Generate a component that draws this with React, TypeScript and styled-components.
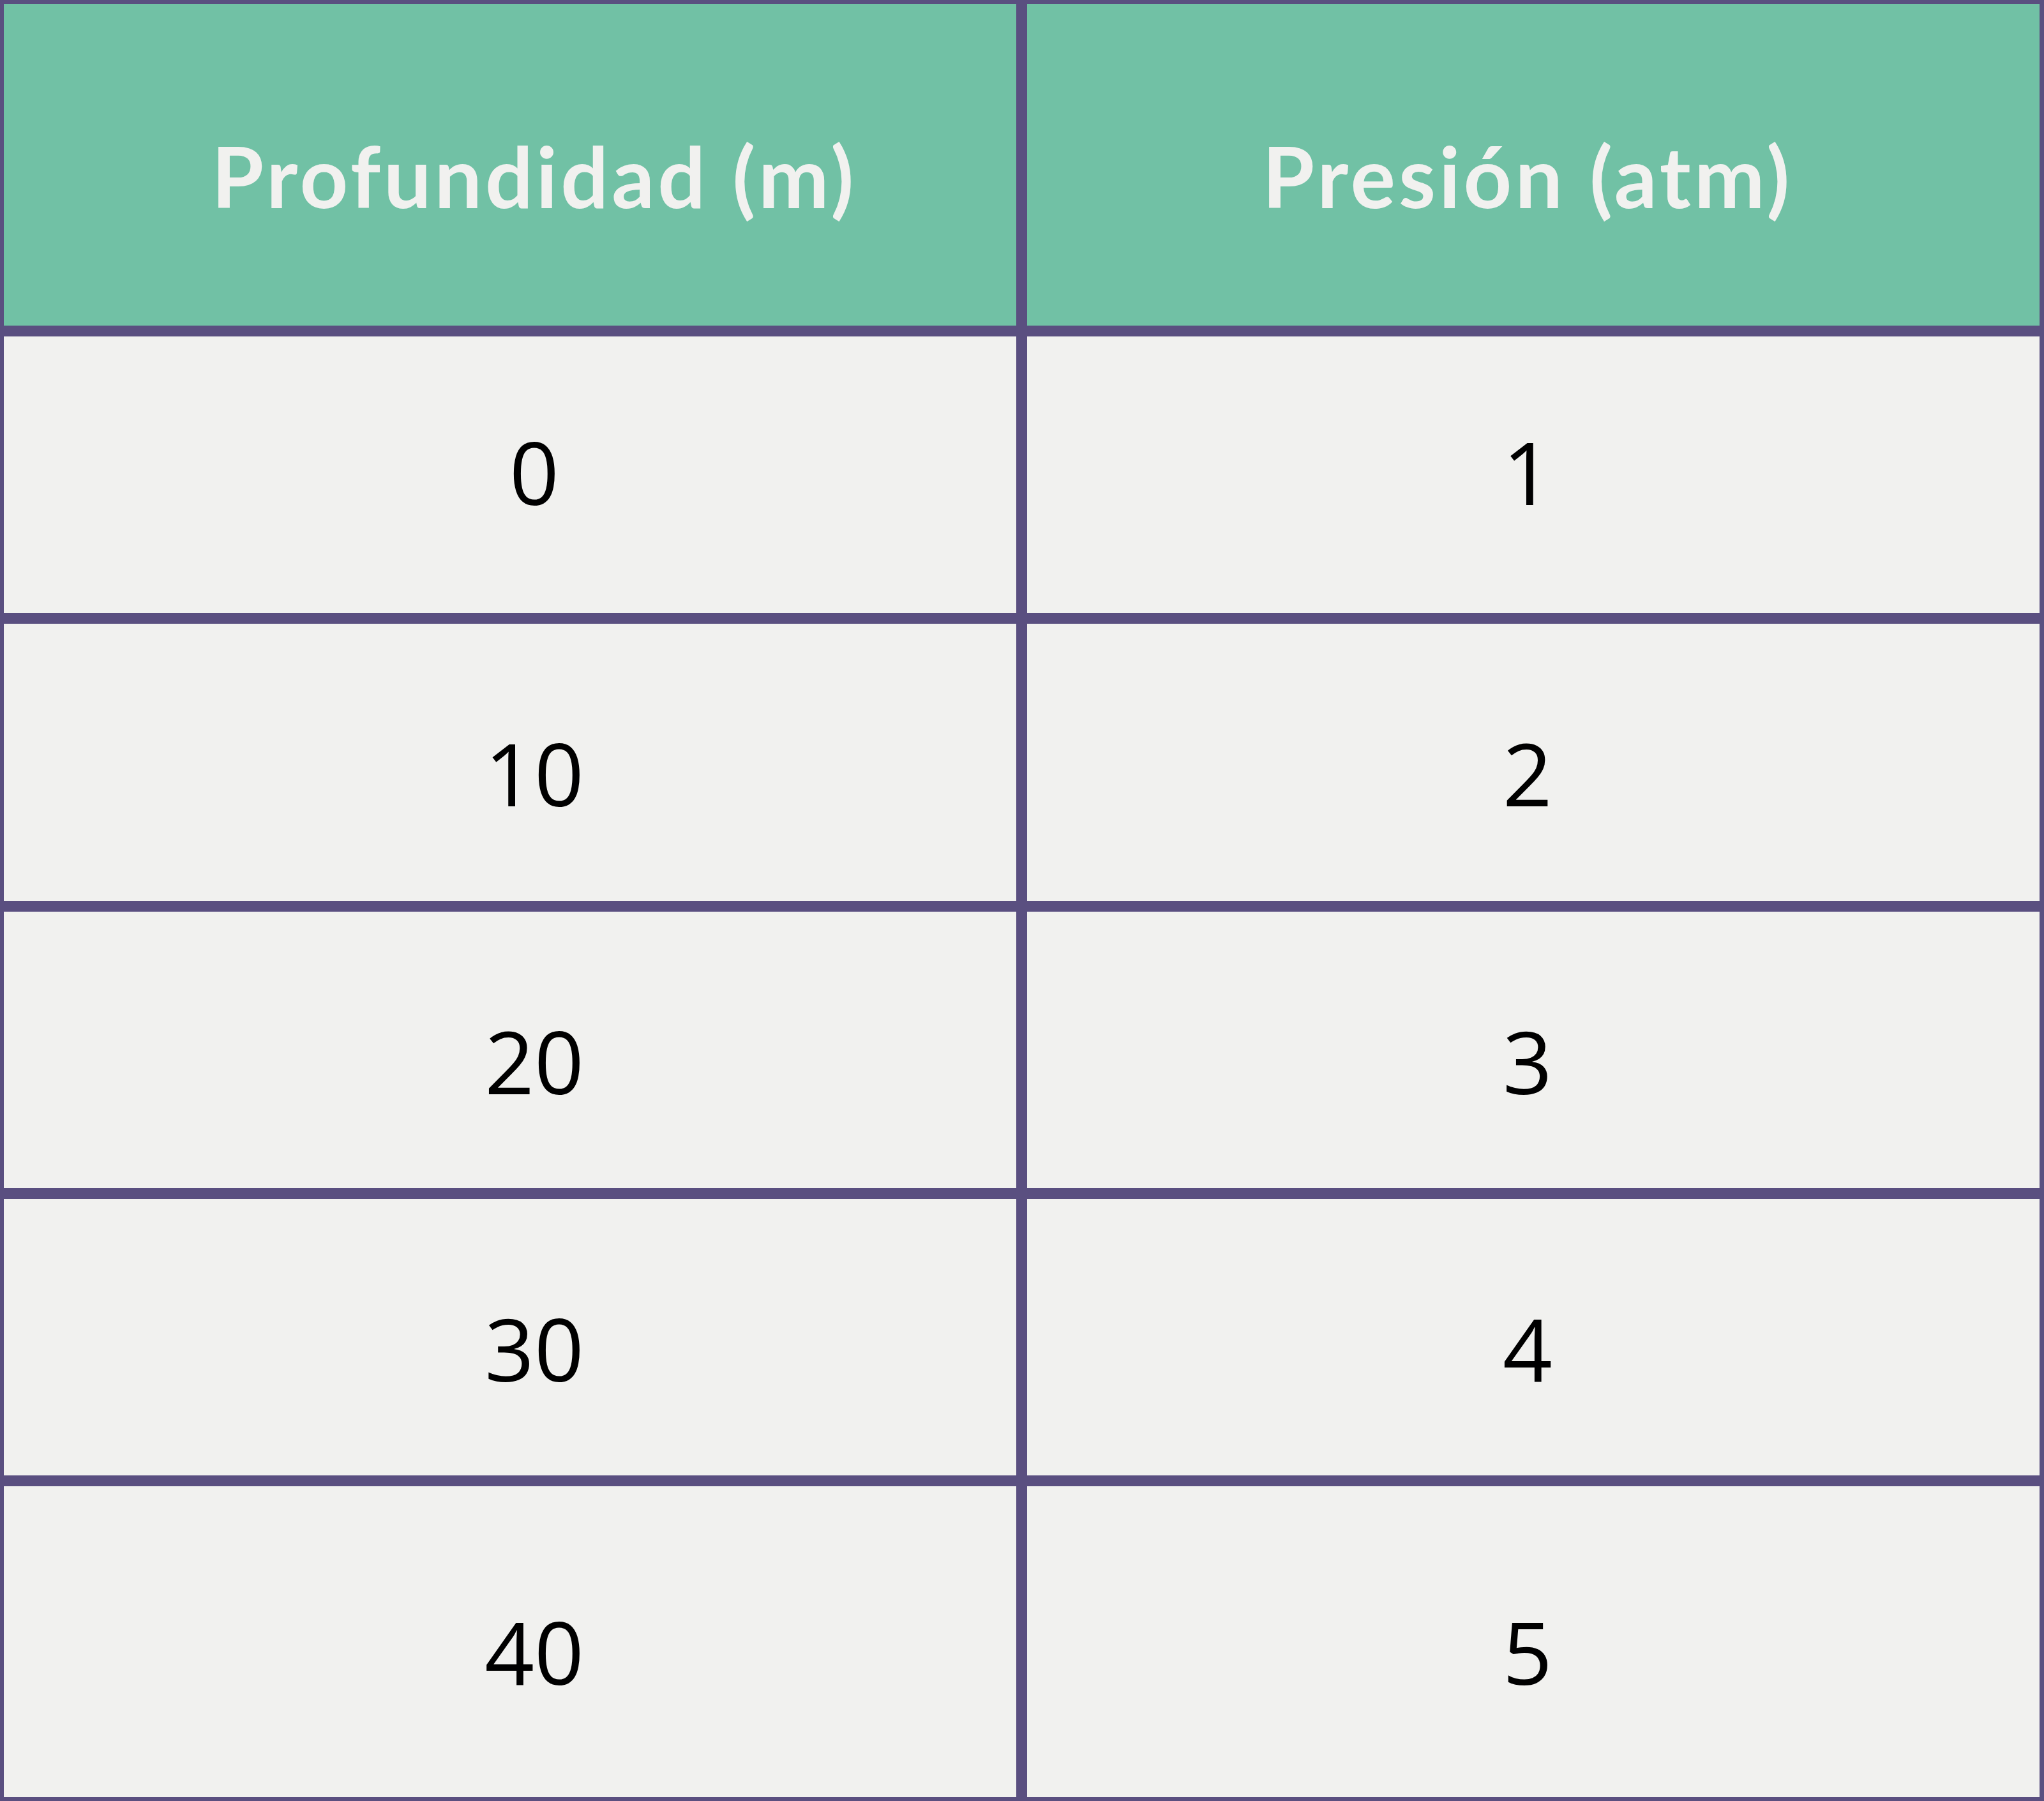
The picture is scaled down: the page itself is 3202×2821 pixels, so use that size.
import React from 'react';
import styled, { createGlobalStyle } from 'styled-components';

const GlobalStyle = createGlobalStyle`
  html, body {
    margin: 0;
    padding: 0;
    background: #5a4f80;
  }
`;

const Table = styled.div`
  display: grid;
  grid-template-columns: 1586px 1586px;
  grid-template-rows: 504px 433px 434px 433px 433px 487px;
  gap: 17px;
  padding: 6px 7px 6px 6px;
  width: 3202px;
  height: 2821px;
  box-sizing: border-box;
  background: #5a4f80;
`;

// $shift moves the text down (positive) or up (negative) from the cell centre
const Cell = styled.div<{ $side: 'left' | 'right'; $shift?: number }>`
  display: flex;
  align-items: center;
  justify-content: center;
  box-sizing: border-box;
  background: #f1f1ef;
  color: #000;
  font-family: "Open Sans", Lato, sans-serif;
  font-weight: 400;
  font-size: 136px;
  line-height: 1;
  padding-left: ${(p) => (p.$side === 'left' ? '76px' : '0')};
  padding-right: ${(p) => (p.$side === 'right' ? '18px' : '0')};
  padding-top: ${(p) => Math.max(0, (p.$shift ?? 0) * 2)}px;
  padding-bottom: ${(p) => Math.max(0, -(p.$shift ?? 0) * 2)}px;
`;

const HeaderCell = styled(Cell)`
  background: #71c1a5;
  color: #f1f1ef;
  font-family: Lato, "Open Sans", sans-serif;
  font-weight: 700;
  font-size: 132px;
  letter-spacing: 5px;
  padding-top: 34px;
`;

const rows: { depth: string; pressure: string; shift: number }[] = [
  { depth: '0', pressure: '1', shift: -5 },
  { depth: '10', pressure: '2', shift: 17 },
  { depth: '20', pressure: '3', shift: 17 },
  { depth: '30', pressure: '4', shift: 17 },
  { depth: '40', pressure: '5', shift: 15 },
];

export default function App() {
  return (
    <>
      <GlobalStyle />
      <Table>
        <HeaderCell $side="left">Profundidad (m)</HeaderCell>
        <HeaderCell $side="right">Presión (atm)</HeaderCell>
        {rows.map((r) => (
          <React.Fragment key={r.depth}>
            <Cell $side="left" $shift={r.shift}>{r.depth}</Cell>
            <Cell $side="right" $shift={r.shift}>{r.pressure}</Cell>
          </React.Fragment>
        ))}
      </Table>
    </>
  );
}
